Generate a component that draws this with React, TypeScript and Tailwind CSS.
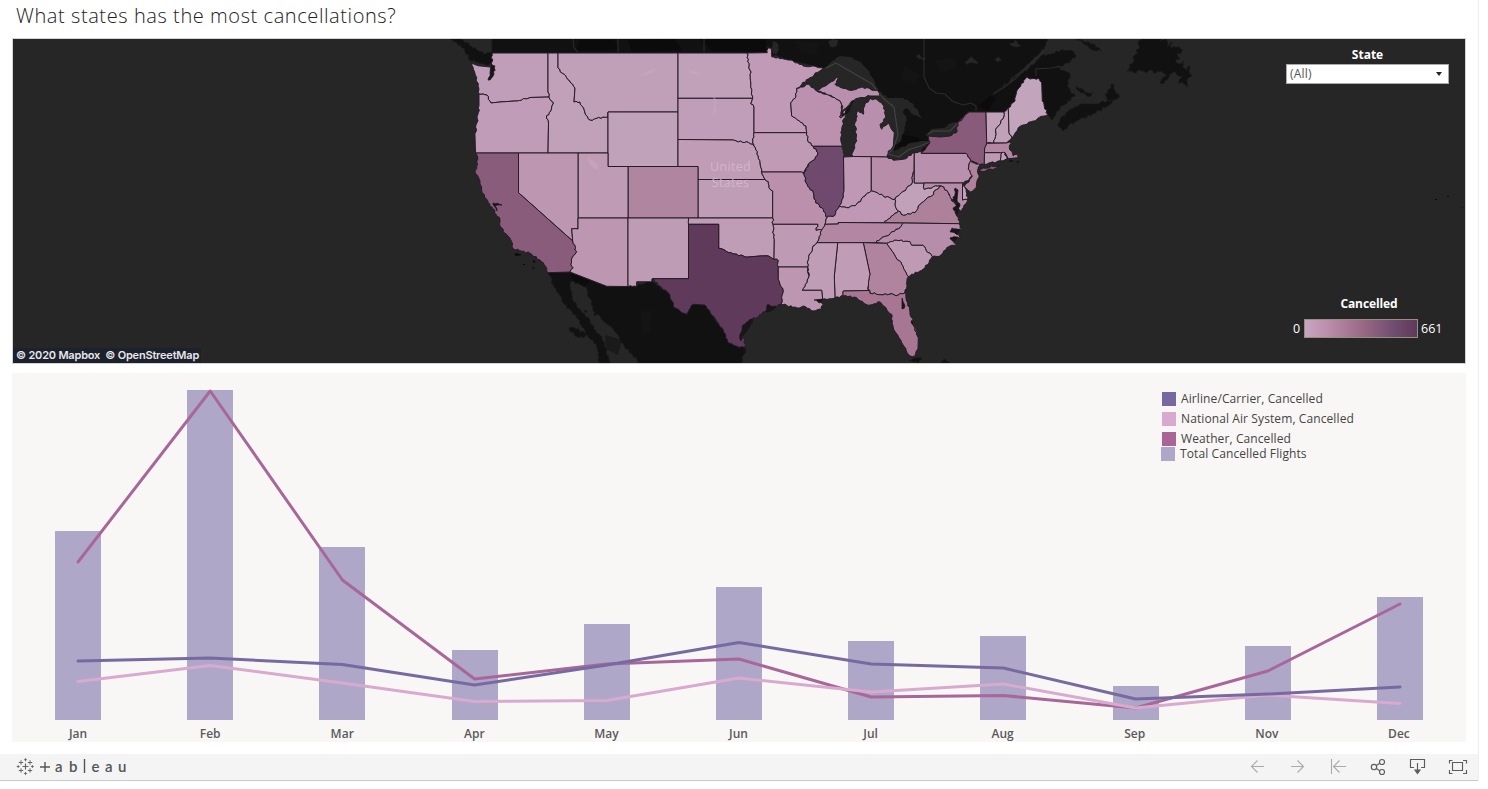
import React from "react";

type Pt = [number, number];

const parse = (s: string): Pt[] =>
  s.trim().split(/\s+/).map((p) => p.split(",").map(Number) as Pt);

const hash = (a: number, b: number, c: number, d: number) => {
  const v = Math.sin(a * 12.9898 + b * 78.233 + c * 37.719 + d * 9.151) * 43758.5453;
  return v - Math.floor(v) - 0.5;
};

// Splits a natural border (river, coast) into a jagged line. The result only
// depends on the two end points, so neighbouring shapes share the same edge.
function jag(p: Pt, q: Pt, amp: number): Pt[] {
  const flip = p[0] > q[0] || (p[0] === q[0] && p[1] > q[1]);
  const [a, b] = flip ? [q, p] : [p, q];
  const dx = b[0] - a[0];
  const dy = b[1] - a[1];
  const len = Math.hypot(dx, dy);
  const straight = (Math.abs(dx) < 1.1 || Math.abs(dy) < 1.1) && len > 9;
  if (straight || len > 31 || len < 3) return [q];
  const n = Math.max(2, Math.round(len / 2.2));
  const out: Pt[] = [];
  for (let i = 1; i < n; i++) {
    const t = i / n;
    const o = hash(a[0], a[1], b[0], b[1] + i * 3.7) * amp;
    out.push([a[0] + dx * t - (dy / len) * o, a[1] + dy * t + (dx / len) * o]);
  }
  if (flip) out.reverse();
  out.push(q);
  return out;
}

function shape(s: string, amp = 1.8) {
  const pts = parse(s);
  const all: Pt[] = [pts[0]];
  pts.forEach((p, i) => all.push(...jag(p, pts[(i + 1) % pts.length], amp)));
  return "M" + all.map(([x, y]) => `${x.toFixed(1)},${y.toFixed(1)}`).join("L") + "Z";
}

const STATES: [string, string, string][] = [
  ["WA", "#c09db8", "492,53 548,53 548,92 549,97 530,97.5 515,101 500,102 491,103 487,95 479,94 478,86 475,74 472,63 481,66 490,67 492,62"],
  ["OR", "#c09cb8", "479,94 487,95 491,103 500,102 515,101 530,97.5 549,97 553.5,103 546.5,118 548.5,123 548,153 475.5,153 475,136 477,122.7 479,106"],
  ["ID", "#c1a1ba", "548,53 558,53 558,68 575,88 574,102 580,102 585,113 590,120 603,117 608,117 608,153 548,153 548.5,123 546.5,118 553.5,103 549,97 548,92"],
  ["MT", "#c09fb9", "558,53 678,53 678,112 608,112 608,117 603,117 590,120 585,113 580,102 574,102 575,88 558,68"],
  ["WY", "#c0a2ba", "608,112 678,112 678,166.5 608,166.5"],
  ["ND", "#c1a0b9", "678,53 747,53 750,70 752.7,98.3 678,98.3"],
  ["SD", "#c09db8", "678,98.3 752.7,98.3 750.7,103.7 754,107 754,132.7 752.7,143 754,146 746.7,141.7 738.3,142 733.3,140 678,139.5"],
  ["NE", "#c09cb7", "678,139.5 733.3,140 738.3,142 746.7,141.7 754,146 758.3,156 761.7,172 765,179.5 698,179.5 698,166.5 678,166.5"],
  ["KS", "#c09db7", "698,179.5 765,179.5 768.3,181.7 769,187.7 772.7,191 772.7,218 698,218"],
  ["CO", "#b0859f", "628,166.5 698,166.5 698,218 628,218"],
  ["UT", "#bf9bb5", "578,153 608,153 608,166.5 628,166.5 628,218 578,218"],
  ["NV", "#bd96b2", "518.5,153 578,153 578,229 571.7,228.7 572.7,241 518.5,192.7"],
  ["CA", "#895c7b", "475.5,153 518.5,153 518.5,192.7 572.7,241 576.7,251.7 573.3,256 571,264.3 573.3,267.7 570,272 547.7,272.7 543.3,262.7 530,253.3 513.3,248.7 511.7,241.7 500,226 500,219.3 493,209 488.3,202.7 481.7,191 480,181 475.3,173.3 477.7,159.3"],
  ["AZ", "#bd96b2", "578,218 628,218 628,286.5 606.7,286.3 570,272 573.3,267.7 571,264.3 573.3,256 576.7,251.7 572.7,241 571.7,228.7 578,229"],
  ["NM", "#bf9cb6", "628,218 688.5,218 688.5,278.7 652.3,278.7 652.3,281.8 636.7,281.8 636.7,286.5 628,286.5"],
  ["OK", "#c09db7", "688.5,218 772.7,218 773,224.3 774.3,239.3 774,259.3 768.3,256 760,256 748.3,257 736.7,254.3 726.7,251.7 718.7,248.3 718.7,224.3 688.5,224.3"],
  ["TX", "#603a5b", "688.5,224.3 718.7,224.3 718.7,248.3 726.7,251.7 736.7,254.3 748.3,257 760,256 768.3,256 774,259.3 778.3,260.3 778.3,279.3 783.3,290.3 781,304.3 770,307.7 756.7,317.7 746.7,327.7 743.3,336 745.7,348.7 733.3,345 727.7,341.7 723.3,330 713.3,316 705,305 693.3,304.3 686.7,314.3 680,311 673.3,306 670,295.3 660,286 652.3,278.7 688.5,278.7"],
  ["MN", "#c09ab6", "747,53 767.3,52.7 767.7,46.7 770.7,48 771.7,56.7 780,58.7 790,60 803.3,66 812,66 823.3,68.3 810,77.7 796.7,88.3 796,96 790.7,102.7 791.7,116 806,126 806.7,132.7 754,132.7 754,107 750.7,103.7 752.7,98.3 750,70"],
  ["WI", "#bb91af", "796.7,88.3 808.3,84.3 816.7,91 835,97.7 841,102.7 841.7,110 839.3,117 846.7,108 842.3,126 840.7,139.3 842.3,146.3 813.3,146.3 807.7,141 806.7,132.7 806,126 791.7,116 790.7,102.7 796,96"],
  ["IA", "#c09bb6", "754,132.7 806.7,132.7 807.7,141 813.3,146.3 817.7,152.7 815,159.3 808.3,164.3 804,172.7 801.7,172 761.7,172 758.3,156 754,146 752.7,143"],
  ["MO", "#ba90ad", "761.7,172 801.7,172 804,174.3 806,182.7 813.3,192.7 815.7,202.7 823.3,209.3 826.7,217.7 825,224.3 821.7,230.3 816,230.3 817.7,224.3 773,224.3 772.7,218 772.7,191 769,187.7 768.3,181.7 765,179.5"],
  ["IL", "#70496e", "813.3,146.3 842.3,146.3 843.5,157 844,189.3 843,198 839.3,206 835,215.3 826.7,217.7 823.3,209.3 815.7,202.7 813.3,192.7 806,182.7 804,174.3 808.3,164.3 815,159.3 817.7,152.7"],
  ["MI1", "#b88fac", "816.7,90 828,84 838.3,77 835,84.3 842,88 850,90.3 858,88 866.7,87.7 878.3,91 880,96 870,96 860,97.7 851.7,101 843.3,111 841,102.7 835,97.7"],
  ["MI2", "#b88fac", "870.7,98.7 865,104.3 863.3,114.3 858,110 855,122.7 856.7,141 851.7,154.3 853.3,156.5 886.7,157 888.3,151 893.3,146 894.3,132.7 888.3,123.3 881.7,129.3 880,124.3 885.7,117.7 884,106 876.7,99.3"],
  ["IN", "#be98b4", "843.5,157 853.3,156.5 871.3,156.7 871.3,191 865,196 856.7,204.3 846.7,207.7 839.3,206 843,198 844,189.3"],
  ["OH", "#b78daa", "871.3,156.7 886.7,157 893.3,160.3 903.3,159.3 914.3,152.7 914,171 911.7,184.3 900,194.3 895,199.3 883.3,196 871.3,191"],
  ["KY", "#be98b4", "871.3,191 883.3,196 895,199.3 896.7,209.3 898.3,211 883.3,222.7 838.3,222.5 838.3,224 825,224.3 826.7,217.7 835,215.3 839.3,206 846.7,207.7 856.7,204.3 865,196"],
  ["WV", "#c1a0b9", "914.3,183 924,183 924.3,189.3 933.3,186.7 941.7,186 935,190.3 931.7,196 926.7,198.3 918.3,206 915,212.7 903.3,215.3 898.3,211 896.7,209.3 895,199.3 900,194.3 911.7,184.3 914,171"],
  ["PA", "#b990ad", "914.3,152.7 921,151 921.3,153.3 966,153.3 970.7,161 968.3,169.3 972.3,176 963.3,183 914.3,183"],
  ["NY", "#895b7a", "921.3,153.3 930,142 928.3,136 940,137 950,136 957.3,131 957.7,123.3 969.3,112 986,112 986.7,143.3 984.5,152.7 984.3,164.3 979,165 970.7,161 966,153.3"],
  ["LI", "#895b7a", "979,171.7 983.3,168 1000,165.3 995,168.7"],
  ["NJ", "#af829c", "970.7,161 980,165.3 977.5,171 979.3,176 976,187.7 970.7,192 964.3,186.7 972.3,176 968.3,169.3"],
  ["VA", "#ae819b", "941.7,186 948.3,192.7 951.7,201 956.7,206 955,212 958.3,217.7 959.3,223.7 903,223 883.3,222.7 898.3,211 903.3,215.3 915,212.7 918.3,206 926.7,198.3 931.7,196 935,190.3"],
  ["MD", "#b68caa", "924,183 963.3,183 962.5,200 967.7,199.5 960,212.7 957,203 951.7,199.3 948.3,192.7 941.7,186 933.3,186.7 924.3,189.3"],
  ["DE", "#c1a0b9", "962.5,183.3 965,187.7 967.7,199.5 962.5,200"],
  ["TN", "#b387a3", "825,224.3 838.3,224 838.3,222.5 903,223 900,227.7 886.7,236 876.7,241 876,242.7 816.7,242.7 821.7,230.3"],
  ["NC", "#b68dab", "903,223 959.3,223.7 961.7,229.3 953,231 962,237.7 950,238 956.7,244.3 946.7,247.7 940,256 932.3,256.7 922.7,245.3 911.7,245.3 910,241.7 896.7,240.3 886.7,243.3 876,242.7 876.7,241 886.7,236 900,227.7"],
  ["SC", "#be9ab4", "886.7,243.3 896.7,240.3 910,241.7 911.7,245.3 922.7,245.3 932.3,256.7 925,267.7 910,276 908.3,276.7 901.7,264.3 893.3,252.7"],
  ["GA", "#b0849f", "863.3,242.7 886.7,243.3 893.3,252.7 901.7,264.3 908.3,276.7 905,292.7 898.3,295 870,293.3 868.3,286 870,274.3"],
  ["AL", "#c09cb7", "837.7,242.7 863.3,242.7 870,274.3 868.3,286 868.3,290.5 843.3,291 843.3,296 835,297.7 834.3,276"],
  ["MS", "#c09db7", "816.7,242.7 837.7,242.7 834.3,276 835,297.7 822.7,299.3 821.7,290.3 802.3,290.3 809,276 807.3,262.7 813,246"],
  ["AR", "#bf9ab5", "773,224.3 817.7,224.3 816,230.3 821.7,230.3 816.7,242.7 813,246 807.3,262.7 807.7,267 778.3,267 778.3,260.3 774,259.3 774.3,239.3"],
  ["LA", "#bd96b2", "778.3,267 807.7,267 809,276 802.3,290.3 821.7,290.3 822.7,299.3 816.7,300 823.3,304.3 821,308 826.7,312 820,309 813.3,311 803.3,306 797,308 786.7,305.3 781,304.3 783.3,290.3 778.3,279.3"],
  ["FL", "#a67692", "843.3,291 868.3,290.5 870,293.3 898.3,295 905,292.7 906.7,301 910,312 913.3,321 918.3,337.7 918,349 915,356 910,356 901.7,342.7 893.3,327.7 891.7,314.3 880,302 868.3,305.3 856.7,297.7 843.3,296"],
  ["VT", "#c1a1ba", "986,112 1004,112 1002.7,119.3 996.7,127.7 994,143 986.7,143.3"],
  ["NH", "#c1a1ba", "1004,112 1008.3,108 1009,132.7 1011.7,137.7 1006.7,143 994,143 996.7,127.7 1002.7,119.3"],
  ["ME", "#c3a4bd", "1008.3,108 1015,101 1017.7,89.3 1026.7,76.7 1030,79 1038.3,78.3 1041.7,82.7 1042.3,101 1047.7,114.3 1033.3,121 1018.3,127.7 1011.7,137.7 1009,132.7"],
  ["MA", "#b387a2", "986.7,143.3 1006.7,143 1011.7,142.7 1009.3,147.7 1013.3,156 1018.3,153.3 1018.3,157.7 1008.3,158.7 1005,152.7 984.5,152.7"],
  ["CT", "#be99b4", "984.5,152.7 1001.7,152.7 1001,161 984.3,164.3"],
  ["RI", "#c1a0b9", "1001.7,152.7 1005,152.7 1007,159 1001,161"],
];

const LAND = [
  "492,20 492,53 767,53 790,60 823,68 838,80 850,90 878,91 890,100 905,130 890,152 893,160 925,150 940,137 957,127 969,112 1010,112 1030,90 1052,120 1060,108 1075,96 1067,86 1070,74 1057,68 1068,63 1076,56 1074,52 1063,50 1048,54 1040,57 1023,73 1010,82 995,92 1010,80 1023,69 1032,60 1040,53 1046,45 1048,20",
  "448,38 456,38 463,40 473,48 484,54 492,52 492,62 486,65 478,62 470,60 464,48",
  "1058,124 1063,116 1072,109 1080,104 1094,104 1107,101 1120,96 1107,106 1092,114 1077,121 1069,125 1063,131",
  "1105,94 1110,89 1113,84 1115,91 1119,97 1108,101",
  "1076,86 1082,89 1088,93 1093,92 1091,96 1081,93",
  "1076,38 1082,40 1093,44 1101,51 1093,50 1083,43",
  "1127,71 1131,67 1130,64 1135,61 1133,57 1138,54 1136,50 1140,47 1138,43 1143,36 1162,36 1160,42 1166,39 1167,46 1172,42 1171,48 1178,47 1183,50 1177,55 1180,58 1175,61 1181,64 1184,61 1182,67 1186,70 1190,66 1189,73 1192,76 1187,79 1187,87 1183,82 1178,84 1182,76 1177,75 1175,71 1170,74 1168,79 1162,84 1160,83 1166,74 1162,71 1156,73 1150,70 1146,73 1140,70 1134,73",
  "547.7,272.7 570,272 606.7,286.3 636.7,286.3 652.3,281.3 670,295.3 680,311 693.3,304.3 705,305 723.3,330 745.7,348.7 741,363 640,363 626.7,349 613.3,329 593.3,311 586.7,287.7 571.7,281 570,284 573,301 590,321 603,341 610,363 600,363 596.7,346 585,331 578.3,319 563,302.7 555,287.7",
  "569,328 576,329 587,334 583,338 575,336",
  "909,361 916,358 922,358 918,363",
  "941,362 944,359 950,363",
];

const LAKES = [
  "796.7,88.3 810,77.7 823.3,68.3 831,62 840,56 850,57 861,62 868,70 874,80 878.3,91 866.7,87.7 858,88 850,90.3 842,88 835,84.3 838.3,77 828,84 816.7,90 808.3,84.3",
  "842,146 840.7,139.3 842.3,126 846.7,108 851.7,101 860,97.7 870,96 880,96 888,98 903,98 912,103 919,113 922,118 914,115 906,108 903,112 907,120 900,142 894,145 894.3,132.7 888.3,123.3 881.7,129.3 880,124.3 885.7,117.7 884,106 876.7,99.3 870.7,98.7 865,104.3 863.3,114.3 858,110 855,122.7 856.7,141 851.7,154.3 843.5,157",
  "886.7,157 888.3,151 897,150 908,144 920,141 930,141 921,151 914.3,152.7 903.3,159.3 893.3,160.3",
  "926,135 931,129 943,128 954,122 958,124 957.3,131 950,136 940,137 928,137",
  "965,62 969,58 972,56 975,60 978,62 977,64 970,63 967,65",
  "1009,44 1014,43 1016,40 1018,44 1022,46 1016,47",
  "828,42 832,39 838,40 837,46 831,47",
  "771,49 773,41 778,44 779,50 777,54 773,53",
  "995,59 999,57 1002,60 998,62",
  "916,56 919,54 921,57 926,58 925,60 919,59",
];

const CRINKLES = [
  "491,63 495,66 494,74 490,80 488,80 490,73",
  "493,203 502,205 495,206 497,211",
  "955,188 958,190 957,200 960,206 957,214 953,208 957,205 953,197 955,194",
  "952,228 960,229 958,233 950,232",
  "950,238 958,237 955,241",
  "743,325 754,317 750,326 745,333 741,341 740,334",
  "768,304 776,307 773,310 766,312",
  "814,300 823,299 820,303",
  "902,298 905,306 902,309",
  "850,106 854,100 850,110 840,118",
  "912,320 916,332 911,322",
];

const MONTHS = ["Jan", "Feb", "Mar", "Apr", "May", "Jun", "Jul", "Aug", "Sep", "Nov", "Dec"];
const BARS = [531, 390, 547, 650, 624, 587, 641, 636, 686, 646, 597];
const SERIES = [
  { color: "#a8679a", y: [562, 391, 580, 679, 664, 659, 697, 695.5, 708, 671, 604] },
  { color: "#d9aacf", y: [681.5, 665.5, 683, 701.5, 700.5, 678, 692, 684, 708, 695, 703.5] },
  { color: "#776aa1", y: [661, 658, 664.5, 685, 665, 642.5, 664, 668, 699, 694, 687] },
];
const LEGEND = [
  { label: "Airline/Carrier, Cancelled", swatch: "bg-[#7768a0]" },
  { label: "National Air System, Cancelled", swatch: "bg-[#d9aacf]" },
  { label: "Weather, Cancelled", swatch: "bg-[#a86596]" },
];

const cx = (i: number) => 78 + i * 132.2;

function UsMap() {
  return (
    <svg viewBox="13 39 1452 324" className="block h-[324px] w-[1452px]" aria-label="Cancellations by state">
      <rect x="13" y="39" width="1452" height="324" fill="#262626" />
      {LAND.map((d, i) => (
        <path key={i} d={shape(d, 2.6)} fill="#111111" stroke="#181818" strokeWidth="0.8" />
      ))}
      <g fill="#070707" opacity="0.5">
        <path d="M580 40L615 40L618 50L575 51ZM628 40L675 39L682 50L632 52ZM700 39L766 39L766 52L712 51Z" />
        <path d="M895 135L912 136L925 141L900 150ZM978 106L990 96L996 98L988 111ZM570 273L590 281L584 287L572 279Z" />
      </g>
      <g fill="#161616" opacity="0.7">
        <path d="M795 41L820 43L815 55L800 52ZM935 60L955 57L957 69L940 72ZM905 66L921 75L915 83L900 78ZM640 312L652 310L651 330L643 334ZM605 335L622 340L618 355L606 349Z" />
      </g>
      {LAKES.map((d, i) => (
        <path key={i} d={shape(d, 1.6)} fill="#262626" />
      ))}
      <g fill="none" stroke="#444" strokeWidth="1.1">
        <path d="M826 68L836 63L872 84L877 91L884 99L894 107L898 135L893 149L888 154L899 157L908 150L920 146L930 142M928 134L933 131L950 131L956 125L969 112" />
        <path d="M573 39L574 48L578 52M618 39V53M704 39V52" stroke="#2b2b2b" />
        <path d="M924 39V77L929 88L936 93L945 94L952 101L963 105L971 103L976 106L976 111M1036 76L1036 69L1052 68L1060 66M1074 98L1085 97" stroke="#2c2c2c" />
        <path d="M993 94L1003 88L1015 79L1024 70L1034 60L1046 50" stroke="#2c2c2c" />
      </g>
      {STATES.map(([id, fill, d]) => (
        <path key={id} d={shape(d)} fill={fill} stroke="#251c25" strokeWidth="1" strokeLinejoin="round" />
      ))}
      <g fill="#c9acc3" opacity="0.45">
        <path d="M640 75L648 71L656 68L655 72L646 75L640 76ZM587 157L592 160L598 164L599 170L593 168L589 163ZM685 66L690 70L702 74L702 75L692 74ZM713 92L716 100L716 112L712 117L714 105Z" />
      </g>
      {CRINKLES.map((d, i) => (
        <path key={i} d={shape(d, 2)} fill="#191519" stroke="#191519" strokeWidth="0.7" />
      ))}
      <g fill="#0a0a0a">
        <path d="M514 254L517 253L522 255L516 256ZM523 264h2v1h-2ZM533 260L536 262L533 263ZM532 266L535 269L533 269ZM1435 199h2v1h-2ZM1447 196h2v1h-2ZM1462 207h1v1h-1ZM1008 161L1013 160L1012 162ZM1016 162L1019 161L1018 163ZM584 310L587 311L586 313ZM594 313L596 315L594 316Z" />
      </g>
      <g fill="#d2b5ce" className="font-['Open_Sans',sans-serif]" fontSize="12.5" textAnchor="middle" letterSpacing="0.3">
        <text x="730.5" y="171">United</text>
        <text x="730.5" y="187">States</text>
      </g>
    </svg>
  );
}

function CancelChart() {
  return (
    <svg viewBox="12 373 1454 347" className="block h-[347px] w-[1454px]" aria-label="Cancelled flights by month">
      {BARS.map((top, i) => (
        <rect key={i} x={Math.round(cx(i) - 23)} y={top} width="46" height={720 - top} fill="#aea7c7" />
      ))}
      {SERIES.map((s) => (
        <polyline
          key={s.color}
          points={s.y.map((y, i) => `${cx(i)},${y}`).join(" ")}
          fill="none"
          stroke={s.color}
          strokeWidth="3"
          strokeLinecap="round"
          strokeLinejoin="round"
        />
      ))}
    </svg>
  );
}

function TableauMark() {
  const cross = (x: number, y: number, r: number) => `M${x - r} ${y}H${x + r}M${x} ${y - r}V${y + r}`;
  return (
    <svg viewBox="0 0 18 18" className="h-[18px] w-[18px]" fill="none" stroke="#666" strokeWidth="1">
      <path d={cross(9.5, 8.5, 3)} strokeWidth="1.2" />
      <path d={[cross(5, 4.5, 2.2), cross(14, 4.5, 2.2), cross(5, 12.5, 2.2), cross(14, 12.5, 2.2)].join("")} />
      <path d={[cross(9.5, 1.7, 1.6), cross(9.5, 15.5, 1.6), cross(2.2, 8.5, 1.5), cross(16.4, 8.5, 1.5)].join("")} strokeWidth="0.9" />
    </svg>
  );
}

function Toolbar() {
  return (
    <footer className="flex h-[27px] items-center justify-between border-b border-[#c9c9c9] bg-[#f4f4f4] pr-[10px] pl-4">
      <div className="flex items-center">
        <TableauMark />
        <svg viewBox="0 0 12 12" className="ml-[5px] h-3 w-3" stroke="#555" strokeWidth="1.4">
          <path d="M1 6H11M6 1V11" />
        </svg>
        <div className="mb-0.5 ml-1 flex font-['Lato',sans-serif] text-[15px] leading-5 font-semibold text-[#555]">
          <span className="w-[14px]">a</span>
          <span className="w-[13.5px]">b</span>
          <svg viewBox="0 0 3 14" className="mt-[3px] mr-[6px] h-[14px] w-[3px]" stroke="#555" strokeWidth="1.4">
            <path d="M1.5 0V14" />
          </svg>
          <span className="w-[13.5px]">e</span>
          <span className="w-[13px]">a</span>
          <span>u</span>
        </div>
      </div>
      <svg viewBox="1250 757 218 20" className="h-5 w-[218px]" fill="none">
        <g stroke="#aaa" strokeWidth="1.1">
          <path d="M1264 766.5H1251.5M1257.5 760.5L1251.5 766.5L1257.5 772.5" />
          <path d="M1291 766.5H1303.5M1297.5 760.5L1303.5 766.5L1297.5 772.5" />
          <path d="M1331.5 759V774M1346 766.5H1333.5M1339.5 760.5L1333.5 766.5L1339.5 772.5" />
        </g>
        <g stroke="#5c5c5c" strokeWidth="1.15">
          <circle cx="1374" cy="767" r="2.7" />
          <circle cx="1382" cy="762" r="2.5" />
          <circle cx="1382" cy="772" r="2.5" />
          <path d="M1376.3 765.5L1379.8 763.3M1376.3 768.5L1379.8 770.7" />
          <path d="M1414 767.5H1410.5V759.5H1424.5V767.5H1421" />
          <path d="M1417.5 763V770" />
          <path d="M1415 770H1420L1417.5 773.5Z" fill="#5c5c5c" />
          <path d="M1452.5 762.5H1462.5V770.5H1452.5Z" />
          <path d="M1449.5 763.5V760.5H1452.5M1463 760.5H1466.5V763.5M1449.5 770V773.5H1452.5M1463 773.5H1466.5V770" />
        </g>
      </svg>
    </footer>
  );
}

export default function App() {
  return (
    <div className="h-[789px] w-[1488px] overflow-hidden bg-white font-['Open_Sans',sans-serif]">
      <main className="flex h-[781px] w-[1479px] flex-col border-r border-[#eeeeee]">
        <h1 className="h-[38px] shrink-0 pl-4 text-[20px] leading-[31px] font-light tracking-[0.58px] whitespace-nowrap text-[#222]">
          What states has the most cancellations?
        </h1>

        <section className="relative ml-3 h-[326px] w-[1454px] shrink-0 border border-[#d4d4d4]">
          <UsMap />
          <div className="absolute bottom-0 left-0 h-[15px] w-[188px] bg-[#1d212d] pl-[3px] font-[Inter,sans-serif] text-[11px] leading-[14px] font-semibold tracking-[-0.2px] whitespace-nowrap text-[#e8e8e8]">
            © 2020 Mapbox&nbsp; © OpenStreetMap
          </div>
          <div className="absolute top-[7px] right-4 flex w-[163px] flex-col gap-[1px] text-center text-[12px]">
            <label className="leading-[17px] font-bold text-white">State</label>
            <div className="flex h-5 items-center justify-between border border-[#aaa] bg-white pr-[6px] pl-[3px] tracking-[0.2px] text-[#555]">
              <span>(All)</span>
              <svg viewBox="0 0 6 4" className="h-1 w-[6px]" fill="#222">
                <path d="M0 0H6L3 4Z" />
              </svg>
            </div>
          </div>
          <div className="absolute right-5 bottom-[25px] flex w-[152px] flex-col gap-[7px] text-[12.5px] text-white">
            <div className="text-center text-[12px] leading-[17px] font-bold tracking-[-0.1px]">Cancelled</div>
            <div className="flex h-[19px] items-center gap-[3px] leading-[19px]">
              <span className="w-2">0</span>
              <span className="h-[19px] w-[114px] border border-[#96917d] bg-[linear-gradient(90deg,#c9a4c1_0%,#bd91af_18%,#9b6a86_50%,#704c70_80%,#5e395b_100%)]" />
              <span>661</span>
            </div>
          </div>
        </section>

        <section className="relative mt-[9px] ml-3 h-[369px] w-[1454px] shrink-0 bg-[#f8f7f5]">
          <CancelChart />
          <div className="grid grid-cols-11 pr-px text-center text-[12px] leading-[28px] font-semibold text-[#5a5a5a]">
            {MONTHS.map((m) => (
              <span key={m}>{m}</span>
            ))}
          </div>
          <div className="absolute top-4 left-[1149px] text-[12px] tracking-[0.1px] text-[#444]">
            {LEGEND.map((l) => (
              <div key={l.label} className="flex h-5 items-center gap-[5px] pl-px whitespace-nowrap">
                <span className={`h-[14px] w-[14px] ${l.swatch}`} />
                {l.label}
              </div>
            ))}
            <div className="-mt-[5px] flex h-5 items-center gap-[5px] whitespace-nowrap">
              <span className="h-[14px] w-[14px] bg-[#aea7c7]" />
              Total Cancelled Flights
            </div>
          </div>
        </section>

        <div className="mt-3">
          <Toolbar />
        </div>
      </main>
    </div>
  );
}
